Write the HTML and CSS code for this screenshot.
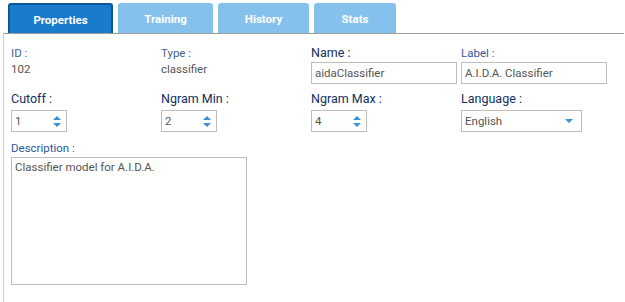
FILE: index.html
```html
<!DOCTYPE html>
<html>
<head>
<meta charset="utf-8">
<link rel="stylesheet" href="styles.css">
</head>
<body>
<div class="page">
  <div class="tabs">
    <div class="tab active t1">Properties</div>
    <div class="tab t2">Training</div>
    <div class="tab t3">History</div>
    <div class="tab t4">Stats</div>
  </div>
  <div class="panel">
    <div class="grid row1">
      <div class="field">
        <div class="lbl info">ID :</div>
        <div class="val">102</div>
      </div>
      <div class="field">
        <div class="lbl info">Type :</div>
        <div class="val">classifier</div>
      </div>
      <div class="field">
        <div class="lbl req">Name :</div>
        <div class="input wide">aidaClassifier</div>
      </div>
      <div class="field">
        <div class="lbl opt">Label :</div>
        <div class="input wide">A.I.D.A. Classifier</div>
      </div>
    </div>
    <div class="grid row2">
      <div class="field">
        <div class="lbl req">Cutoff :</div>
        <div class="input spin"><span>1</span><span class="arrows"><i class="up"></i><i class="dn"></i></span></div>
      </div>
      <div class="field">
        <div class="lbl req">Ngram Min :</div>
        <div class="input spin"><span>2</span><span class="arrows"><i class="up"></i><i class="dn"></i></span></div>
      </div>
      <div class="field">
        <div class="lbl req">Ngram Max :</div>
        <div class="input spin"><span>4</span><span class="arrows"><i class="up"></i><i class="dn"></i></span></div>
      </div>
      <div class="field">
        <div class="lbl req">Language :</div>
        <div class="input select"><span>English</span><i class="dn"></i></div>
      </div>
    </div>
    <div class="desc">
      <div class="lbl opt">Description :</div>
      <div class="textarea">Classifier model for A.I.D.A.</div>
    </div>
  </div>
</div>
</body>
</html>
```
FILE: styles.css
```css
html, body {
  margin: 0;
  padding: 0;
  background: #fff;
}
body {
  font-family: Roboto, "Liberation Sans", sans-serif;
  font-size: 11.5px;
  color: #555;
}
.page {
  padding: 3px 1px 0 3px;
  height: 299px;
  display: flex;
  flex-direction: column;
}
.tabs {
  display: flex;
  gap: 5px;
  padding-left: 5px;
  height: 30px;
}
.tab {
  background: #85c1ec;
  color: #fff;
  font-weight: bold;
  font-size: 11.5px;
  border-radius: 3px 3px 0 0;
  display: flex;
  align-items: center;
  justify-content: center;
  box-sizing: border-box;
  padding-top: 2px;
}
.tab.active {
  background: #187bcb;
  border: 1px solid #0d5796;
  border-width: 2px 2px 0 2px;
}
.t1 { width: 105px; }
.t2 { width: 95px; }
.t3 { width: 91px; }
.t4 { width: 82px; }
.panel {
  flex: 1;
  border-top: 1px solid #9d9d9d;
  border-left: 1px solid #cfcfcf;
  padding: 12px 0 0 7px;
}
.grid {
  display: grid;
  grid-template-columns: repeat(4, 150px);
}
.lbl {
  line-height: 14px;
  height: 14px;
}
.lbl.info { color: #4a6287; }
.lbl.req { color: #0f2f5f; font-size: 12.5px; }
.lbl.opt { color: #2c5a9a; }
.row1 .lbl { margin-bottom: 2px; }
.val {
  line-height: 14px;
  color: #555;
  margin-top: 2px;
}
.input {
  box-sizing: border-box;
  height: 22px;
  border: 1px solid #bdbdbd;
  line-height: 20px;
  padding-left: 3px;
  color: #555;
  font-size: 11.5px;
  background: #fff;
}
.wide { width: 146px; }
.row2 { margin-top: 8px; }
.row2 .lbl { margin-bottom: 4px; }
.spin {
  width: 56px;
  display: flex;
  justify-content: space-between;
  align-items: center;
  padding-right: 5px;
}
.arrows {
  display: flex;
  flex-direction: column;
  gap: 3px;
}
.up, .dn {
  display: block;
  width: 0;
  height: 0;
  border-left: 4px solid transparent;
  border-right: 4px solid transparent;
}
.up { border-bottom: 4px solid #3d8fd6; }
.dn { border-top: 4px solid #3d8fd6; }
.select {
  width: 121px;
  display: flex;
  justify-content: space-between;
  align-items: center;
  padding-right: 8px;
}
.desc { margin-top: 9px; }
.desc .lbl { margin-bottom: 2px; }
.textarea {
  box-sizing: border-box;
  width: 236px;
  height: 128px;
  border: 1px solid #bdbdbd;
  padding: 2px 3px;
  line-height: 14px;
  color: #555;
}
```
